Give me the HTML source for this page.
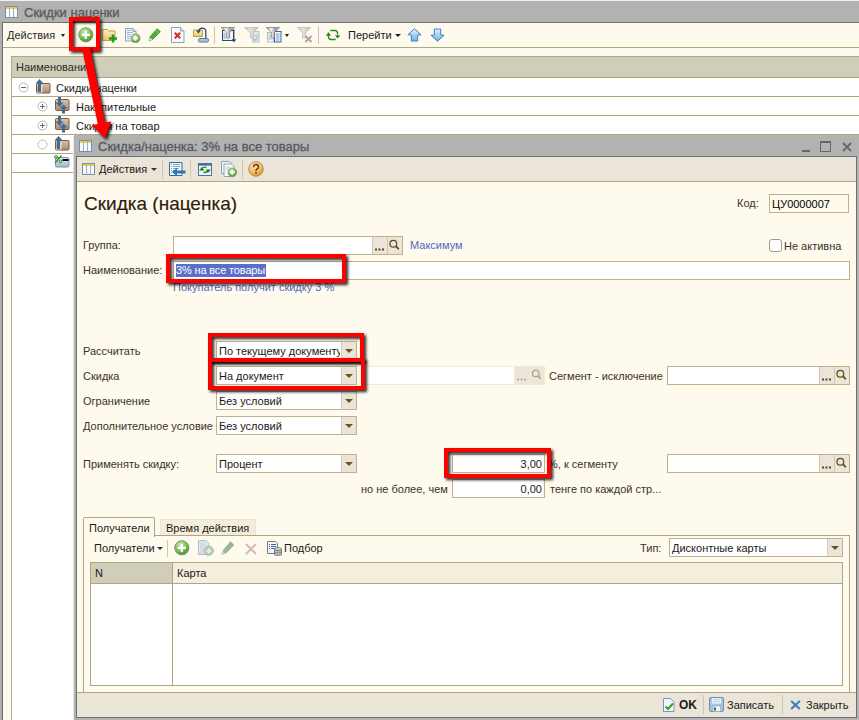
<!DOCTYPE html>
<html><head><meta charset="utf-8">
<style>
*{box-sizing:border-box;margin:0;padding:0}
html,body{width:859px;height:720px;overflow:hidden;background:#b0b0b0;font-family:"Liberation Sans",sans-serif;font-size:11px;color:#1c1a16}
.a{position:absolute}
.t{position:absolute;white-space:nowrap;line-height:13px}
.hl{position:absolute;height:1px;background:#aea780}
.vl{position:absolute;width:1px;background:#aea780}
.fld{position:absolute;background:#fff;border:1px solid #bdb28c}
.btn{position:absolute;background:#ebe4d8;border-left:1px solid #cfc6ac}
.dd{position:absolute;background:#ebe4d8;border-left:1px solid #d4ccb5}
.dd:after{content:"";position:absolute;left:3px;top:6.5px;border-left:4.5px solid transparent;border-right:4.5px solid transparent;border-top:4.5px solid #6b5220}
.red{position:absolute;border:4px solid #f00;filter:drop-shadow(2px 2px 1.5px rgba(0,0,0,.85))}
.sep{position:absolute;width:1px;background:#cfc6ac}
.blue{color:#5466bd}
</style></head><body>
<!-- background window -->
<div class="a" style="left:0;top:0;width:859px;height:1px;background:#f0f0f0"></div>
<div class="a" style="left:0;top:1px;width:859px;height:21px;background:#b2b2b2"></div>
<!-- title icon -->
<svg class="a" style="left:5px;top:6px" width="13" height="12" viewBox="0 0 13 12">
<rect x="0.5" y="0.5" width="12" height="11" fill="#f4f8ff" stroke="#7d8fa3"/>
<rect x="1" y="1" width="11" height="2" fill="#f3cf3a"/>
<line x1="4.5" y1="1" x2="4.5" y2="11" stroke="#9fb0c0"/><line x1="8.5" y1="1" x2="8.5" y2="11" stroke="#9fb0c0"/>
</svg>
<div class="t" style="left:24px;top:6px;font-size:13px;color:#5b5a5e;-webkit-text-stroke:.35px #5b5a5e">Скидки наценки</div>
<div class="a" style="left:2px;top:22px;width:857px;height:698px;background:#fefaee;border-left:1px solid #6e6e6e;border-top:1px solid #6e6e6e"></div>
<!-- toolbar -->
<div class="t" style="left:7px;top:29px;color:#2b2b2b">Действия</div>
<div class="a" style="left:61px;top:34px;border-left:2.8px solid transparent;border-right:2.8px solid transparent;border-top:3.2px solid #2a1e06"></div>
<div class="hl" style="left:3px;top:47px;width:856px"></div>
<!-- table -->
<div class="a" style="left:11px;top:56px;width:848px;height:22px;background:#d0ceb8;border-top:1px solid #aea780;border-bottom:1px solid #aea780"></div>
<div class="vl" style="left:11px;top:56px;height:664px"></div>
<div class="a" style="left:12px;top:78px;width:847px;height:642px;background:#fff"></div>
<div class="t" style="left:16px;top:61px;color:#2a2a2a">Наименование</div>
<div class="hl" style="left:12px;top:96px;width:847px"></div>
<div class="hl" style="left:12px;top:115px;width:847px"></div>
<div class="hl" style="left:12px;top:134px;width:847px"></div>
<div class="hl" style="left:12px;top:153px;width:62px"></div>
<div class="hl" style="left:12px;top:172px;width:62px"></div>
<div class="t" style="left:56px;top:82px">Скидки наценки</div>
<div class="t" style="left:76px;top:101px">Накопительные</div>
<div class="t" style="left:76px;top:120px">Скидки на товар</div>

<!-- dialog -->
<div class="a" style="left:73px;top:136px;width:1px;height:584px;background:#e6e6e6"></div><div class="a" style="left:74px;top:135px;width:785px;height:585px;background:#b2b2b2"></div>
<svg class="a" style="left:79px;top:140px" width="13" height="12" viewBox="0 0 13 12">
<rect x="0.5" y="0.5" width="12" height="11" fill="#f4f8ff" stroke="#7d8fa3"/>
<rect x="1" y="1" width="11" height="2" fill="#f3cf3a"/>
<line x1="4.5" y1="1" x2="4.5" y2="11" stroke="#9fb0c0"/><line x1="8.5" y1="1" x2="8.5" y2="11" stroke="#9fb0c0"/>
</svg>
<div class="t" style="left:98px;top:140px;font-size:13px;color:#5b5a5e;-webkit-text-stroke:.35px #5b5a5e">Скидка/наценка: 3% на все товары</div>
<div class="a" style="left:802px;top:150px;width:8px;height:2px;background:#666"></div>
<div class="a" style="left:820px;top:141px;width:11px;height:11px;border:1.5px solid #666;border-top-width:2.5px"></div>
<svg class="a" style="left:842px;top:142px" width="10" height="10"><path d="M1 1L9 9M9 1L1 9" stroke="#666" stroke-width="1.8"/></svg>
<div class="a" style="left:76px;top:156px;width:781px;height:562px;background:#fefaee;border:1px solid #6e6e6e"></div>
<div class="a" style="left:77px;top:157px;width:779px;height:25px;background:#ebe4d8;border-bottom:1px solid #aea780"></div>
<svg class="a" style="left:82px;top:163px" width="13" height="12" viewBox="0 0 13 12">
<rect x="0.5" y="0.5" width="12" height="11" fill="#f4f8ff" stroke="#7d8fa3"/>
<rect x="1" y="1" width="11" height="2" fill="#f3cf3a"/>
<line x1="4.5" y1="1" x2="4.5" y2="11" stroke="#9fb0c0"/><line x1="8.5" y1="1" x2="8.5" y2="11" stroke="#9fb0c0"/>
</svg>
<div class="t" style="left:99px;top:163px">Действия</div>
<div class="a" style="left:151px;top:168px;border-left:3.5px solid transparent;border-right:3.5px solid transparent;border-top:3.5px solid #333"></div>
<div class="sep" style="left:162px;top:160px;height:19px"></div>
<div class="sep" style="left:190px;top:160px;height:19px"></div>
<div class="sep" style="left:242px;top:160px;height:19px"></div>
<div class="t" style="left:84px;top:193px;font-size:19px;line-height:22px;color:#2e200a;-webkit-text-stroke:.15px #2e200a">Скидка (наценка)</div>

<div class="t" style="left:737px;top:197px;color:#3b3226">Код:</div>
<div class="a" style="left:769px;top:194px;width:80px;height:19px;border:1px solid #bdb28c"></div>
<div class="t" style="left:772px;top:198px;color:#000">ЦУ0000007</div>

<div class="t" style="left:83px;top:239px;color:#3b3226">Группа:</div>
<div class="fld" style="left:173px;top:236px;width:230px;height:19px"></div>
<div class="btn" style="left:372px;top:237px;width:15px;height:17px"></div>
<div class="btn" style="left:387px;top:237px;width:15px;height:17px"></div>
<svg class="a" style="left:372px;top:237px" width="15" height="17"><path d="M3 12.5h2M6.5 12.5h2M10 12.5h2" stroke="#5a4a1a" stroke-width="1.8"/></svg>
<div class="t blue" style="left:410px;top:239px">Максимум</div>
<div class="a" style="left:769px;top:239px;width:13px;height:13px;border:1px solid #a39b7b;border-radius:3px;background:#fff"></div>
<div class="t" style="left:784px;top:240px;color:#3b3226">Не активна</div>

<div class="t" style="left:83px;top:264px;color:#3b3226">Наименование:</div>
<div class="fld" style="left:173px;top:261px;width:677px;height:19px"></div>
<div class="a" style="left:176px;top:264px;width:90px;height:13px;background:#5a6fc8"></div>
<div class="t" style="left:176px;top:264px;color:#fff;letter-spacing:-.15px">3% на все товары</div>
<div class="t blue" style="left:173px;top:281px">Покупатель получит скидку 3 %</div>

<div class="t" style="left:83px;top:345px;color:#3b3226">Рассчитать</div>
<div class="t" style="left:83px;top:370px;color:#3b3226">Скидка</div>
<div class="t" style="left:83px;top:395px;color:#3b3226">Ограничение</div>
<div class="t" style="left:83px;top:420px;color:#3b3226">Дополнительное условие</div>
<div class="t" style="left:83px;top:458px;color:#3b3226">Применять скидку:</div>

<div class="fld" style="left:216px;top:341px;width:141px;height:19px"></div><div class="dd" style="left:341px;top:342px;width:15px;height:17px"></div>
<div class="t" style="left:219px;top:345px;width:121px;overflow:hidden">По текущему документу</div>
<div class="fld" style="left:216px;top:366px;width:141px;height:19px"></div><div class="dd" style="left:341px;top:367px;width:15px;height:17px"></div>
<div class="t" style="left:219px;top:370px">На документ</div>
<div class="fld" style="left:216px;top:391px;width:141px;height:19px"></div><div class="dd" style="left:341px;top:392px;width:15px;height:17px"></div>
<div class="t" style="left:219px;top:395px">Без условий</div>
<div class="fld" style="left:216px;top:416px;width:141px;height:19px"></div><div class="dd" style="left:341px;top:417px;width:15px;height:17px"></div>
<div class="t" style="left:219px;top:420px">Без условий</div>
<div class="fld" style="left:216px;top:454px;width:141px;height:19px"></div><div class="dd" style="left:341px;top:455px;width:15px;height:17px"></div>
<div class="t" style="left:219px;top:458px">Процент</div>

<div class="a" style="left:362px;top:366px;width:183px;height:19px;border:1px solid #f3ebc9;background:#fff"></div>
<div class="a" style="left:514px;top:367px;width:15px;height:17px;background:#ebe5da;border-left:1px solid #f3ebc9"></div>
<div class="a" style="left:529px;top:367px;width:15px;height:17px;background:#ebe5da;border-left:1px solid #f3ebc9"></div>
<svg class="a" style="left:514px;top:367px" width="31" height="17"><path d="M3 12.5h2M6.5 12.5h2M10 12.5h2" stroke="#a8a090" stroke-width="1.6"/><circle cx="21.8" cy="6.5" r="3.3" fill="none" stroke="#a09a88" stroke-width="1.1"/><path d="M24 9l2.8 2.8" stroke="#a09a88" stroke-width="1.6"/></svg>
<div class="t" style="left:549px;top:370px;color:#3b3226">Сегмент - исключение</div>
<div class="fld" style="left:667px;top:366px;width:183px;height:19px"></div>
<div class="btn" style="left:819px;top:367px;width:15px;height:17px"></div>
<div class="btn" style="left:834px;top:367px;width:15px;height:17px"></div><svg class="a" style="left:819px;top:367px" width="15" height="17"><path d="M3 12.5h2M6.5 12.5h2M10 12.5h2" stroke="#5a4a1a" stroke-width="1.8"/></svg>

<div class="fld" style="left:452px;top:454px;width:93px;height:19px"></div>
<div class="t" style="left:452px;top:458px;width:90px;text-align:right">3,00</div>
<div class="t" style="left:548px;top:458px;color:#3b3226">%, к сегменту</div>
<div class="fld" style="left:667px;top:454px;width:183px;height:19px"></div>
<div class="btn" style="left:819px;top:455px;width:15px;height:17px"></div>
<div class="btn" style="left:834px;top:455px;width:15px;height:17px"></div><svg class="a" style="left:819px;top:455px" width="15" height="17"><path d="M3 12.5h2M6.5 12.5h2M10 12.5h2" stroke="#5a4a1a" stroke-width="1.8"/></svg>
<div class="t" style="left:361px;top:483px;color:#3b3226">но не более, чем</div>
<div class="fld" style="left:452px;top:479px;width:93px;height:19px"></div>
<div class="t" style="left:452px;top:483px;width:90px;text-align:right">0,00</div>
<div class="t" style="left:550px;top:483px;color:#3b3226">тенге по каждой стр...</div>

<!-- tabs -->
<div class="a" style="left:160px;top:519px;width:96px;height:17px;background:#f3eedb;border:1px solid #ece5c8;border-bottom:none"></div>
<div class="t" style="left:166px;top:522px">Время действия</div>
<div class="a" style="left:83px;top:535px;width:767px;height:158px;border:1px solid #b0a780"></div>
<div class="a" style="left:83px;top:517px;width:72px;height:20px;background:#fefaee;border:1px solid #b0a780;border-bottom:none;border-radius:2px 2px 0 0"></div>
<div class="t" style="left:89px;top:522px">Получатели</div>
<div class="t" style="left:94px;top:542px">Получатели</div>
<div class="a" style="left:157px;top:547px;border-left:3.5px solid transparent;border-right:3.5px solid transparent;border-top:3.5px solid #333"></div>
<div class="sep" style="left:167px;top:540px;height:17px"></div>
<div class="t" style="left:284px;top:542px">Подбор</div>
<div class="t" style="left:640px;top:542px;color:#3b3226">Тип:</div>
<div class="fld" style="left:669px;top:538px;width:174px;height:19px"></div><div class="dd" style="left:827px;top:539px;width:15px;height:17px"></div>
<div class="t" style="left:672px;top:542px">Дисконтные карты</div>
<div class="a" style="left:90px;top:562px;width:753px;height:124px;background:#fff;border:1px solid #b0a780"></div>
<div class="a" style="left:91px;top:563px;width:81px;height:21px;background:#d0ceb8;border-bottom:1px solid #b0a780"></div>
<div class="a" style="left:172px;top:563px;width:670px;height:21px;background:#f3efdc;border-bottom:1px solid #b0a780;border-left:1px solid #b0a780"></div>
<div class="vl" style="left:172px;top:584px;height:101px"></div>
<div class="t" style="left:95px;top:567px">N</div>
<div class="t" style="left:177px;top:567px">Карта</div>

<!-- footer -->
<div class="a" style="left:77px;top:692px;width:779px;height:25px;background:#ebe4d8;border-top:1px solid #aea57f"></div>
<div class="t" style="left:679px;top:699px;font-size:12px;font-weight:bold">OK</div>
<div class="sep" style="left:703px;top:695px;height:19px"></div>
<div class="t" style="left:727px;top:699px">Записать</div>
<div class="sep" style="left:782px;top:695px;height:19px"></div>
<div class="t" style="left:806px;top:699px">Закрыть</div>

<!-- icons -->
<svg width="0" height="0" style="position:absolute">
<defs>
<radialGradient id="gg" cx="40%" cy="30%" r="75%"><stop offset="0" stop-color="#c6eab0"/><stop offset=".55" stop-color="#7cc25a"/><stop offset="1" stop-color="#3f8a2a"/></radialGradient>
<radialGradient id="og" cx="40%" cy="30%" r="75%"><stop offset="0" stop-color="#fde7bf"/><stop offset=".6" stop-color="#f3b860"/><stop offset="1" stop-color="#d98a2a"/></radialGradient>
<linearGradient id="fg" x1="0" y1="0" x2="0" y2="1"><stop offset="0" stop-color="#d7c2ae"/><stop offset="1" stop-color="#a78d78"/></linearGradient>
<linearGradient id="yg" x1="0" y1="0" x2="0" y2="1"><stop offset="0" stop-color="#fff3c0"/><stop offset="1" stop-color="#e9c56a"/></linearGradient>
<linearGradient id="bg" x1="0" y1="0" x2="0" y2="1"><stop offset="0" stop-color="#e4f2ff"/><stop offset="1" stop-color="#6aaee8"/></linearGradient>
<linearGradient id="fun" x1="0" y1="0" x2="1" y2="0"><stop offset="0" stop-color="#8a8a8a"/><stop offset=".35" stop-color="#f4f4f4"/><stop offset=".7" stop-color="#9a9a9a"/><stop offset="1" stop-color="#d8d8d8"/></linearGradient><linearGradient id="fung" x1="0" y1="0" x2="1" y2="0"><stop offset="0" stop-color="#c0c0c0"/><stop offset=".4" stop-color="#e4e4e4"/><stop offset="1" stop-color="#bcbcbc"/></linearGradient><linearGradient id="bg2" x1="0" y1="0" x2="0" y2="1"><stop offset="0" stop-color="#e4f2ff"/><stop offset="1" stop-color="#6aaee8"/></linearGradient><linearGradient id="cg" x1="0" y1="0" x2="0" y2="1"><stop offset="0" stop-color="#eaf2f8"/><stop offset="1" stop-color="#9fb8cc"/></linearGradient>
</defs></svg>
<!-- bg toolbar -->
<svg class="a" style="left:78px;top:27px" width="16" height="16" viewBox="0 0 16 16"><circle cx="7.8" cy="7.8" r="7.1" fill="url(#gg)" stroke="#7d9470" stroke-width=".9"/><path d="M7.8 3.8v8M3.8 7.8h8" stroke="#fff" stroke-width="2.3"/></svg>
<svg class="a" style="left:102px;top:28px" width="16" height="15" viewBox="0 0 16 15"><path d="M.5 1.5h5l1 1.5h6.5v9.5H.5z" fill="url(#yg)" stroke="#c89a40"/><path d="M11 6.5v8M7 10.5h8" stroke="#1f9a1a" stroke-width="2.4"/></svg>
<svg class="a" style="left:125px;top:28px" width="16" height="15" viewBox="0 0 16 15"><path d="M.5 .5h7.5l3 3v9.5H.5z" fill="#f4f8fc" stroke="#8aa2b8"/><path d="M8 .5v3h3" fill="#dbe6f0" stroke="#8aa2b8"/><path d="M2 2.5h4.5M2 4.5h6M2 6.5h4M2 8.5h3.5M2 10.5h3" stroke="#9fb3c8" stroke-width="1"/><circle cx="10.5" cy="10.3" r="4.5" fill="url(#gg)" stroke="#8a9a88" stroke-width=".9"/><path d="M10.5 7.8v5M8 10.3h5" stroke="#fff" stroke-width="1.7"/></svg>
<svg class="a" style="left:148px;top:28px" width="13" height="14" viewBox="0 0 13 14"><path d="M9.3 .8l3 3L4.8 11.3 1.3 12.7 1.8 9z" fill="#4fb035" stroke="#2f8a1e" stroke-width=".8"/><path d="M8 2.5l3 3" stroke="#8ad870" stroke-width="1"/><path d="M1.5 9.2l2.7 2.6-2.8 1z" fill="#f0f0e0"/></svg>
<svg class="a" style="left:171px;top:27px" width="14" height="16" viewBox="0 0 14 16"><path d="M.5 .5h9l3.5 3.5v11.5H.5z" fill="#f6f9fd" stroke="#8aa4bc"/><path d="M9.5 .5v3.5H13" fill="#d8e4ee" stroke="#8aa4bc"/><path d="M3.8 5.8l5.4 5.4M9.2 5.8l-5.4 5.4" stroke="#d42a1e" stroke-width="2"/></svg>
<svg class="a" style="left:193px;top:26px" width="16" height="17" viewBox="0 0 16 17"><path d="M.5 4h9v6.5h-9z" fill="url(#yg)" stroke="#c89a40"/><path d="M5.5 5.5C6 2 11.5 .5 12.8 4.5V14" fill="none" stroke="#1f3f60" stroke-width="1.2"/><path d="M2.8 4.5l5.2.2-2.7 2.8z" fill="#1f5a90"/><rect x="5.5" y="12.5" width="10" height="3.5" rx="1.2" fill="#a9c0d6" stroke="#5c7a98"/></svg>
<div class="sep" style="left:214px;top:26px;height:18px"></div>
<svg class="a" style="left:221px;top:27px" width="16" height="16" viewBox="0 0 16 16"><rect x="1.5" y="3.5" width="11" height="10" fill="#eef5fb" stroke="#2a4a6e"/><path d="M2.5 7h2M2.5 9h2M2.5 11h2" stroke="#7a9ab8"/><path d="M.3 .5h13.4L8.6 5.5v5.3Q7 12.3 5.4 10.8V5.5z" fill="url(#fun)" stroke="#6a6a6a" stroke-width=".6"/><path d="M13 2.5v10" stroke="#24405e" stroke-width="1.2" stroke-dasharray="1.2 .8"/><path d="M10.8 12.2h4.4L13 15.5z" fill="#24405e"/></svg>
<svg class="a" style="left:244px;top:27px" width="16" height="16" viewBox="0 0 16 16"><rect x="8.5" y="4.5" width="6.5" height="10.5" fill="#dfe4e8" stroke="#b8c2ca"/><path d="M9.5 12l1.5 1.5 3-4" fill="none" stroke="#a9b8c4" stroke-width="1.1"/><path d="M9 8.5h5" stroke="#c0c8d0"/><path d="M.3 .5h14L9.3 5.5v5.3Q7.8 12.3 6.3 10.8V5.5z" fill="url(#fung)" stroke="#b0b0b0" stroke-width=".6"/></svg>
<svg class="a" style="left:266px;top:27px" width="17" height="16" viewBox="0 0 17 16"><rect x="1.5" y="5.5" width="6" height="9.5" fill="#f2f6f8" stroke="#b4bcc4"/><path d="M2.5 8h3M2.5 10h3M2.5 12h3" stroke="#a8b4be"/><rect x="8.5" y="4.5" width="6.5" height="10.5" fill="#f4f8fc" stroke="#2f6aa8"/><path d="M10 7h3.5M10 9h3.5M10 11h3.5M10 13h3.5" stroke="#6c93bd" stroke-width=".9"/><path d="M.3 .5h13.4L8.6 5.5v5.3Q7 12.3 5.4 10.8V5.5z" fill="url(#fun)" stroke="#6a6a6a" stroke-width=".6"/></svg>
<div class="a" style="left:285px;top:34px;border-left:2.5px solid transparent;border-right:2.5px solid transparent;border-top:3px solid #2a1e06"></div>
<svg class="a" style="left:297px;top:27px" width="16" height="16" viewBox="0 0 16 16"><path d="M.3 .5h13.4L8.6 5.5v5.3Q7 12.3 5.4 10.8V5.5z" fill="url(#fung)" stroke="#b0b0b0" stroke-width=".6"/><path d="M8.5 9l6 6M14.5 9l-6 6" stroke="#b59c9c" stroke-width="1.8"/></svg>
<div class="sep" style="left:318px;top:26px;height:18px"></div>
<svg class="a" style="left:325px;top:29px" width="16" height="13" viewBox="0 0 16 13"><path d="M5.3 1.5H10Q12.6 1.5 12.6 5.5M10.7 10.5H6Q3.4 10.5 3.4 6.5" fill="none" stroke="#2a8a1a" stroke-width="1.4"/><path d="M10 6.2h5.2l-2.6 3.4zM1 6.8h5L3.4 3.3z" fill="#1f7a12"/></svg>
<div class="t" style="left:348px;top:29px">Перейти</div>
<div class="a" style="left:395px;top:34px;border-left:3px solid transparent;border-right:3px solid transparent;border-top:3px solid #2a1e06"></div>
<svg class="a" style="left:407px;top:28px" width="15" height="14" viewBox="0 0 15 14"><path d="M7.5 .7l6.6 6.1h-3.4v6.2H4.3V6.8H.9z" fill="url(#bg)" stroke="#3f7fc0" stroke-linejoin="round"/></svg>
<svg class="a" style="left:430px;top:28px" width="15" height="14" viewBox="0 0 15 14"><path d="M7.5 13.3l6.6-6.1h-3.4V1H4.3v6.2H.9z" fill="url(#bg2)" stroke="#3f7fc0" stroke-linejoin="round"/></svg>
<!-- tree -->
<svg class="a" style="left:18px;top:82px" width="11" height="11" viewBox="0 0 11 11"><circle cx="5.5" cy="5.5" r="4.5" fill="#fff" stroke="#b4b4b4"/><path d="M3 5.5h5" stroke="#6a6a6a"/></svg>
<svg class="a" style="left:35px;top:78px" width="16" height="16" viewBox="0 0 16 16"><rect x="1.5" y="5.5" width="13.5" height="9.5" rx="1" fill="url(#fg)" stroke="#8a5634"/><path d="M1.5 14.5h6v-9" fill="#ead9c8"/><path d="M4.5 14V5" stroke="#3e6d96" stroke-width="3"/><path d="M.5 5.5L4.5 1 8.5 5.5z" fill="#3e6d96"/></svg>
<svg class="a" style="left:37px;top:101px" width="11" height="11" viewBox="0 0 11 11"><circle cx="5.5" cy="5.5" r="4.5" fill="#fff" stroke="#b4b4b4"/><path d="M3 5.5h5M5.5 3v5" stroke="#6a6a6a"/></svg>
<svg class="a" style="left:37px;top:120px" width="11" height="11" viewBox="0 0 11 11"><circle cx="5.5" cy="5.5" r="4.5" fill="#fff" stroke="#b4b4b4"/><path d="M3 5.5h5M5.5 3v5" stroke="#6a6a6a"/></svg>
<svg class="a" style="left:37px;top:139px" width="11" height="11" viewBox="0 0 11 11"><circle cx="5.5" cy="5.5" r="4.5" fill="#fff" stroke="#bcbcbc"/></svg>
<svg class="a" style="left:55px;top:97px" width="15" height="17" viewBox="0 0 15 17"><rect x=".5" y="2.5" width="13.5" height="11" rx="1" fill="url(#fg)" stroke="#8a5634"/><path d="M4.5 0v6" stroke="#3e6d96" stroke-width="3"/><path d="M.5 5.5h8L4.5 10z" fill="#3e6d96"/><path d="M8.5 16.5V11" stroke="#3e6d96" stroke-width="3"/><path d="M4.5 11.5h8L8.5 7.5z" fill="#3e6d96"/></svg>
<svg class="a" style="left:55px;top:116px" width="15" height="17" viewBox="0 0 15 17"><rect x=".5" y="2.5" width="13.5" height="11" rx="1" fill="url(#fg)" stroke="#8a5634"/><path d="M4.5 0v6" stroke="#3e6d96" stroke-width="3"/><path d="M.5 5.5h8L4.5 10z" fill="#3e6d96"/><path d="M8.5 16.5V11" stroke="#3e6d96" stroke-width="3"/><path d="M4.5 11.5h8L8.5 7.5z" fill="#3e6d96"/></svg>
<svg class="a" style="left:54px;top:135px" width="16" height="16" viewBox="0 0 16 16"><rect x="1.5" y="5.5" width="13.5" height="9.5" rx="1" fill="url(#fg)" stroke="#8a5634"/><path d="M1.5 14.5h6v-9" fill="#ead9c8"/><path d="M4.5 14V5" stroke="#3e6d96" stroke-width="3"/><path d="M.5 5.5L4.5 1 8.5 5.5z" fill="#3e6d96"/></svg>
<svg class="a" style="left:54px;top:155px" width="16" height="13" viewBox="0 0 16 13"><rect x="1.5" y="2.5" width="13.5" height="9.5" rx="1.5" fill="url(#cg)" stroke="#7a94ab"/><rect x="8.5" y="4" width="6" height="2" fill="#000"/><path d="M1 8L7.5 .5" stroke="#2d8a1f" stroke-width="1.2"/><circle cx="2" cy="2" r="1.4" fill="none" stroke="#2d8a1f"/><circle cx="6.5" cy="6.5" r="1.4" fill="none" stroke="#2d8a1f"/></svg>
<!-- dialog toolbar -->
<svg class="a" style="left:169px;top:162px" width="17" height="16" viewBox="0 0 17 16"><path d="M.5 .5h12.5v13H.5z" fill="#f6f9fc" stroke="#3b6a98"/><path d="M2 2.5h1M4 2.5h7M2 4.5h1M4 4.5h7M2 6.5h1M4 6.5h6M2 8.5h1M4 8.5h2M2 10.5h1" stroke="#7ea6cc" stroke-width="1"/><path d="M6.5 10h10" stroke="#2f78b6" stroke-width="3"/><path d="M3 10L8 5.8v8.4z" fill="#2f78b6"/></svg>
<svg class="a" style="left:198px;top:163px" width="14" height="13" viewBox="0 0 14 13"><rect x=".5" y=".5" width="13" height="12" fill="#f0f5fa" stroke="#4a74a0"/><rect x="1" y="1" width="12" height="1.6" fill="#3f6a98"/><path d="M3.8 5.5Q5 3.8 8.5 4.2M10.2 8Q9 9.8 5.5 9.4" fill="none" stroke="#2a8a1a" stroke-width="1.4"/><path d="M1.2 7.6h5.2L3.8 4.2zM7.6 6.4h5.2l-2.6 3.4z" fill="#1f7a12"/></svg>
<svg class="a" style="left:221px;top:161px" width="16" height="16" viewBox="0 0 16 16"><path d="M.5 .5h8l2 2v10H.5z" fill="#eef3f8" stroke="#8ea4b8"/><path d="M3 3h7.5l2.5 2.5v10H3z" fill="#f8fbfe" stroke="#8ea4b8"/><path d="M4.5 6h5M4.5 8h4" stroke="#b8c8d8"/><circle cx="11.3" cy="11.3" r="4.3" fill="url(#gg)" stroke="#7c8e7a" stroke-width=".8"/><path d="M11.3 8.8v5M8.8 11.3h5" stroke="#fff" stroke-width="1.7"/></svg>
<svg class="a" style="left:248px;top:161px" width="16" height="16" viewBox="0 0 16 16"><circle cx="8" cy="8" r="7.3" fill="url(#og)" stroke="#b8823a" stroke-width=".8"/><path d="M5.6 6.2Q5.6 3.6 8 3.6T10.4 6Q10.4 7.4 8.8 8.2Q8 8.6 8 10" fill="none" stroke="#6a4210" stroke-width="1.5"/><rect x="7.2" y="11" width="1.6" height="1.7" fill="#6a4210"/></svg>
<!-- field buttons -->
<svg class="a" style="left:387px;top:237px" width="15" height="17" viewBox="0 0 15 17"><circle cx="6.3" cy="6.7" r="3.4" fill="none" stroke="#5a4812" stroke-width="1.2"/><path d="M8.8 9.2l3 3" stroke="#5a4812" stroke-width="1.8"/></svg>
<svg class="a" style="left:834px;top:367px" width="15" height="17" viewBox="0 0 15 17"><circle cx="6.3" cy="6.7" r="3.4" fill="none" stroke="#5a4812" stroke-width="1.2"/><path d="M8.8 9.2l3 3" stroke="#5a4812" stroke-width="1.8"/></svg>
<svg class="a" style="left:834px;top:455px" width="15" height="17" viewBox="0 0 15 17"><circle cx="6.3" cy="6.7" r="3.4" fill="none" stroke="#5a4812" stroke-width="1.2"/><path d="M8.8 9.2l3 3" stroke="#5a4812" stroke-width="1.8"/></svg>
<!-- tab toolbar -->
<svg class="a" style="left:174px;top:540px" width="16" height="16" viewBox="0 0 16 16"><circle cx="7.8" cy="7.8" r="7.1" fill="url(#gg)" stroke="#6f8e62" stroke-width=".9"/><path d="M7.8 3.8v8M3.8 7.8h8" stroke="#fff" stroke-width="2.3"/></svg>
<svg class="a" style="left:198px;top:540px" width="16" height="16" viewBox="0 0 16 16"><path d="M.5 .5h7.5l3 3v11H.5z" fill="#dfe6ec" stroke="#b4c0ca"/><path d="M2 3h5M2 5h6M2 7h5M2 9h4M2 11h4M2 13h4" stroke="#c4d0da" stroke-width=".8"/><circle cx="10.8" cy="10.8" r="4.6" fill="#b9cfb2" stroke="#a2b29e" stroke-width=".8"/><path d="M10.8 8.3v5M8.3 10.8h5" stroke="#e8f0e6" stroke-width="1.6"/></svg>
<svg class="a" style="left:221px;top:541px" width="14" height="14" viewBox="0 0 14 14"><path d="M9.5 .8l3.3 3.3-7.8 7.8-3.9 1.3 1.3-3.9z" fill="#9ab894" stroke="#8aa484" stroke-width=".7"/><path d="M1.6 9.4l2.9 2.8-3.1 1z" fill="#c8d4c4"/></svg>
<svg class="a" style="left:245px;top:543px" width="12" height="12" viewBox="0 0 12 12"><path d="M1 1l10 10M11 1L1 11" stroke="#d4b8b8" stroke-width="2"/></svg>
<svg class="a" style="left:267px;top:541px" width="15" height="15" viewBox="0 0 15 15"><path d="M.5 .5h8l2 2v10H.5z" fill="#f4f6f8" stroke="#707a84"/><path d="M2 3.5h1M4 3.5h5M2 5.5h1M4 5.5h5M2 7.5h1M4 7.5h4" stroke="#4a5ea8" stroke-width="1"/><path d="M7.5 8v5.5c0 .9 1.6 1.5 3.5 1.5s3.5-.6 3.5-1.5V8" fill="#b8b8b8" stroke="#6a6a6a" stroke-width=".8"/><ellipse cx="11" cy="8" rx="3.5" ry="1.4" fill="#dcdcdc" stroke="#6a6a6a" stroke-width=".8"/><path d="M7.5 10.5c0 .9 1.6 1.4 3.5 1.4s3.5-.5 3.5-1.4" fill="none" stroke="#7a7a7a" stroke-width=".7"/></svg>
<!-- footer icons -->
<svg class="a" style="left:663px;top:698px" width="12" height="14" viewBox="0 0 12 14"><path d="M.5 .5h7l3.5 3.5v9.5H.5z" fill="#f4f8fc" stroke="#7a95ae"/><path d="M2.5 8.5l2.5 2.5 5-5.5" fill="none" stroke="#3a9a25" stroke-width="2"/></svg>
<svg class="a" style="left:709px;top:697px" width="15" height="15" viewBox="0 0 15 15"><rect x=".5" y=".5" width="14" height="14" rx="1.5" fill="#a9c4de" stroke="#6a8db0"/><rect x="3" y="1" width="9" height="5.5" fill="#eef4fa"/><path d="M4 2.5h7M4 4.5h7" stroke="#b8cde0"/><rect x="4" y="9" width="7.5" height="5.5" fill="#f0f2f4" stroke="#8aa0b6" stroke-width=".6"/><rect x="5" y="10.5" width="2" height="3" fill="#50647a"/></svg>
<svg class="a" style="left:790px;top:700px" width="11" height="10" viewBox="0 0 11 10"><path d="M1.2 1l8.6 8M9.8 1L1.2 9" stroke="#3c7cc4" stroke-width="2.1"/></svg>
<!-- red overlays -->
<div class="red" style="left:69px;top:17px;width:31px;height:34px"></div>
<div class="red" style="left:166px;top:254px;width:180px;height:29px"></div>
<div class="red" style="left:208px;top:333px;width:156px;height:29px"></div>
<div class="red" style="left:208px;top:358px;width:157px;height:32px"></div>
<div class="red" style="left:444px;top:448px;width:107px;height:30px"></div>
<svg class="a" style="left:0;top:0;filter:drop-shadow(2px 2px 1.5px rgba(0,0,0,.85))" width="130" height="150">
<path d="M81.7 47 L89.9 47 L105.2 122.6 L111.3 121.4 L105 138.6 L91.8 125.2 L97.8 124 Z" fill="#f00"/>
</svg>
</body></html>
